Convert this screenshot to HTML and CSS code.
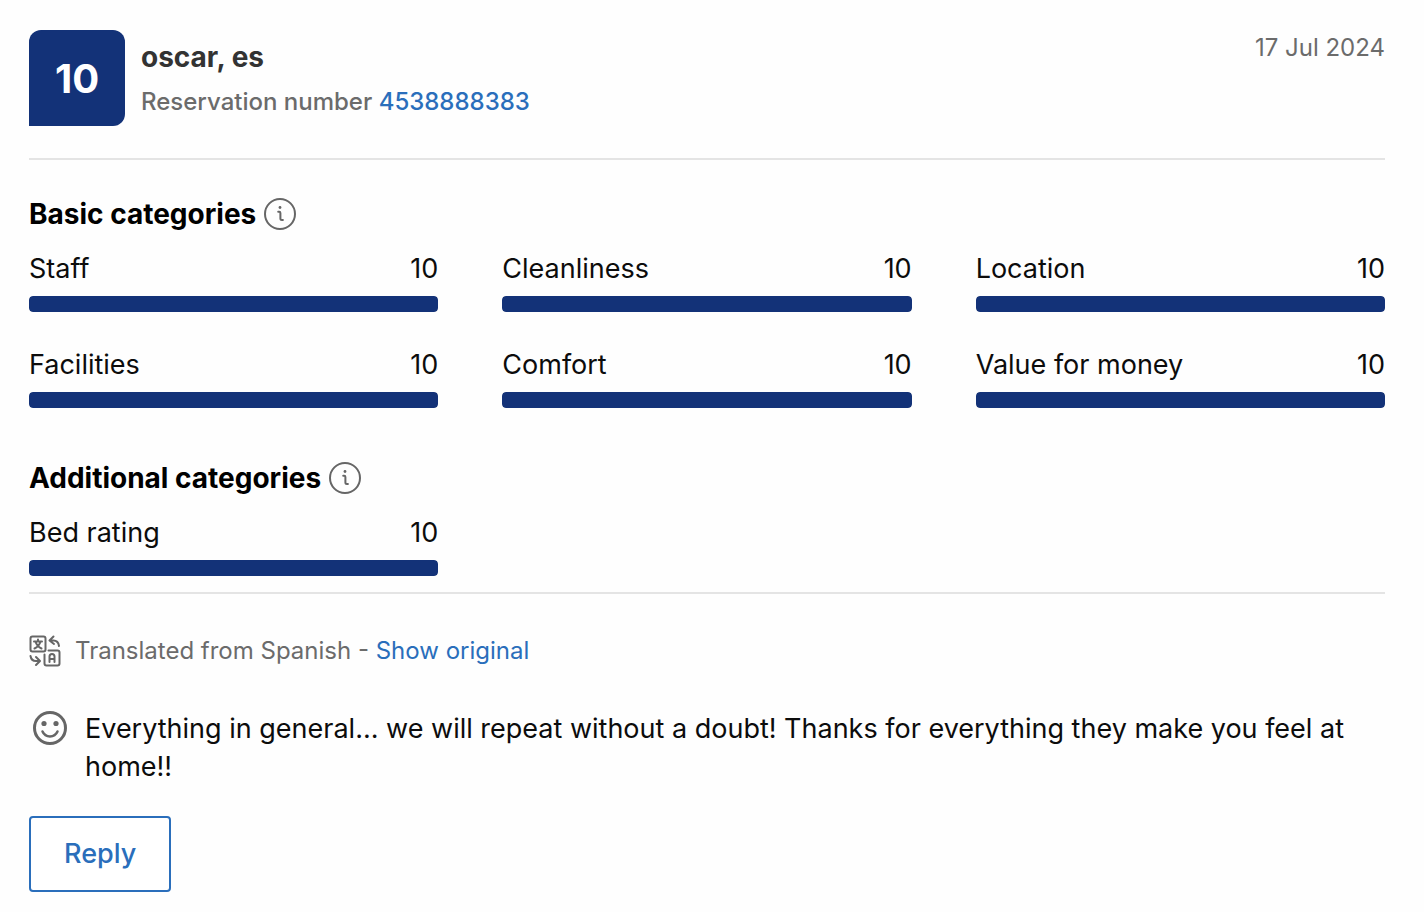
FILE: index.html
```html
<!DOCTYPE html>
<html lang="en">
<head>
<meta charset="utf-8">
<meta name="viewport" content="width=device-width, initial-scale=1">
<title>Guest review</title>
<link rel="stylesheet" href="styles.css">
</head>
<body>
<main class="review">
  <header class="review-header">
    <div class="score">10</div>
    <div class="guest">
      <h1 class="guest-name">oscar, es</h1>
      <p class="reservation">Reservation number <a href="#reservation">4538888383</a></p>
    </div>
    <time class="date" datetime="2024-07-17">17 Jul 2024</time>
  </header>

  <section class="categories">
    <h2 class="heading">Basic categories
      <button class="info" type="button" aria-label="About basic categories"><svg class="info-icon" viewBox="0 0 32 32" aria-hidden="true"><circle cx="16" cy="16" r="15"/><path class="stem" d="M14.200 13.700h1c.7 0 1.200.4 1.200 1.200v5.500c0 .9.600 1.500 1.500 1.500h1"/><circle class="dot" cx="16" cy="9.500" r="1.400"/></svg></button>
    </h2>
    <div class="ratings">
      <div class="rating"><span>Staff</span><span>10</span><div class="track"><div class="fill" style="width:100%"></div></div></div>
      <div class="rating"><span>Cleanliness</span><span>10</span><div class="track"><div class="fill" style="width:100%"></div></div></div>
      <div class="rating"><span>Location</span><span>10</span><div class="track"><div class="fill" style="width:100%"></div></div></div>
      <div class="rating"><span>Facilities</span><span>10</span><div class="track"><div class="fill" style="width:100%"></div></div></div>
      <div class="rating"><span>Comfort</span><span>10</span><div class="track"><div class="fill" style="width:100%"></div></div></div>
      <div class="rating"><span>Value for money</span><span>10</span><div class="track"><div class="fill" style="width:100%"></div></div></div>
    </div>
  </section>

  <section class="categories additional">
    <h2 class="heading">Additional categories
      <button class="info" type="button" aria-label="About additional categories"><svg class="info-icon" viewBox="0 0 32 32" aria-hidden="true"><circle cx="16" cy="16" r="15"/><path class="stem" d="M14.200 13.700h1c.7 0 1.200.4 1.200 1.200v5.500c0 .9.600 1.500 1.500 1.500h1"/><circle class="dot" cx="16" cy="9.500" r="1.400"/></svg></button>
    </h2>
    <div class="ratings">
      <div class="rating"><span>Bed rating</span><span>10</span><div class="track"><div class="fill" style="width:100%"></div></div></div>
    </div>
  </section>

  <section class="feedback">
    <div class="translation">
      <svg class="translate-icon" viewBox="0 0 32 32" aria-hidden="true">
        <rect x="1.500" y="1.500" width="15" height="15" rx="2"/>
        <path d="M5 6.500h8M9 4.500v2M11.500 6.500c-.8 3-3 5.500-6 7M6.500 6.500c.8 3 3 5.500 6 7"/>
        <path d="M19.500 15.500h9a2 2 0 0 1 2 2v11a2 2 0 0 1-2 2h-11a2 2 0 0 1-2-2v-9"/>
        <path d="M20.500 27v-5.500a2.500 2.500 0 0 1 5 0V27M20.500 24h5"/>
        <path d="M24.500 1.500l-4 4 4.500 3.500M21 5.500h3.500c3 0 5 2 5.500 5.500"/>
        <path d="M1.500 21c.5 3.200 2.500 5 5.500 5h3.500M7 22l4 4-4 4"/>
      </svg>
      <p>Translated from Spanish - <a href="#original">Show original</a></p>
    </div>
    <div class="comment">
      <svg class="smile-icon" viewBox="0 0 34 34" aria-hidden="true"><circle cx="17" cy="17" r="15.500"/><path class="mouth" d="M9.500 20.500a8.200 8.200 0 0 0 15 0"/><circle class="eye" cx="11" cy="12.500" r="2.600"/><circle class="eye" cx="23" cy="12.500" r="2.600"/></svg>
      <p>Everything in general... we will repeat without a doubt! Thanks for everything they make you feel at home!!</p>
    </div>
    <button class="reply" type="button">Reply</button>
  </section>
</main>
</body>
</html>
```
FILE: styles.css
```css
* { box-sizing: border-box; }
body { margin: 0; background: #fefefe; color: #0c0c0c; font-family: Inter, "Liberation Sans", sans-serif; font-size: 27px; }
h1, h2, p { margin: 0; }
a { color: #2a6ebb; text-decoration: none; }
svg { display: block; flex: none; fill: none; stroke: #666; stroke-linecap: round; stroke-linejoin: round; }

.review { padding: 30px 39px 20px 29px; }
.review-header { display: flex; gap: 16px; padding-bottom: 32px; border-bottom: 2px solid #e4e4e4; }
.score { display: flex; align-items: center; justify-content: center; flex: none; width: 96px; height: 96px; border-radius: 12px 12px 12px 0; background: #133278; color: #fff; font-size: 40px; font-weight: 700; }
.guest { flex: 1; padding-top: 8px; }
.guest-name { color: #333; font-size: 28px; font-weight: 700; line-height: 38px; }
.reservation { margin-top: 8px; color: #6b6b6b; font-size: 24px; font-weight: 500; line-height: 36px; }
.date { color: #6b6b6b; font-size: 24px; line-height: 36px; }

.categories { padding-top: 36px; }
.additional { padding: 52px 0 16px; border-bottom: 2px solid #e4e4e4; }
.heading { display: flex; align-items: center; gap: 8px; color: #000; font-size: 28px; font-weight: 700; line-height: 36px; }
.info { padding: 0; border: 0; background: none; cursor: pointer; }
.info-icon { width: 32px; height: 32px; stroke-width: 2; }
.dot, .eye { fill: #666; stroke: none; }
.ratings { display: grid; grid-template-columns: repeat(3, 1fr); gap: 32px 64px; padding-top: 16px; }
.rating { display: grid; grid-template-columns: 1fr auto; row-gap: 6px; line-height: 42px; }
.track { grid-column: 1 / -1; height: 16px; border-radius: 4px; background: #e4e4e4; overflow: hidden; }
.fill { height: 100%; border-radius: 4px; background: #133278; }

.feedback { padding-top: 38px; }
.translation { display: flex; align-items: center; gap: 14px; color: #6b6b6b; font-size: 24px; line-height: 38px; }
.translate-icon { width: 32px; height: 32px; stroke-width: 2; }
.comment { display: flex; gap: 18px; padding: 40px 0 30px 4px; line-height: 38px; }
.smile-icon { width: 34px; height: 34px; margin-top: 1px; stroke-width: 3; }
.mouth { stroke-width: 2.500; }
.reply { padding: 0 33px; border: 2px solid #2a6ebb; border-radius: 4px; background: #fff; color: #2a6ebb; font: 500 27px/72px Inter, "Liberation Sans", sans-serif; cursor: pointer; }
```
